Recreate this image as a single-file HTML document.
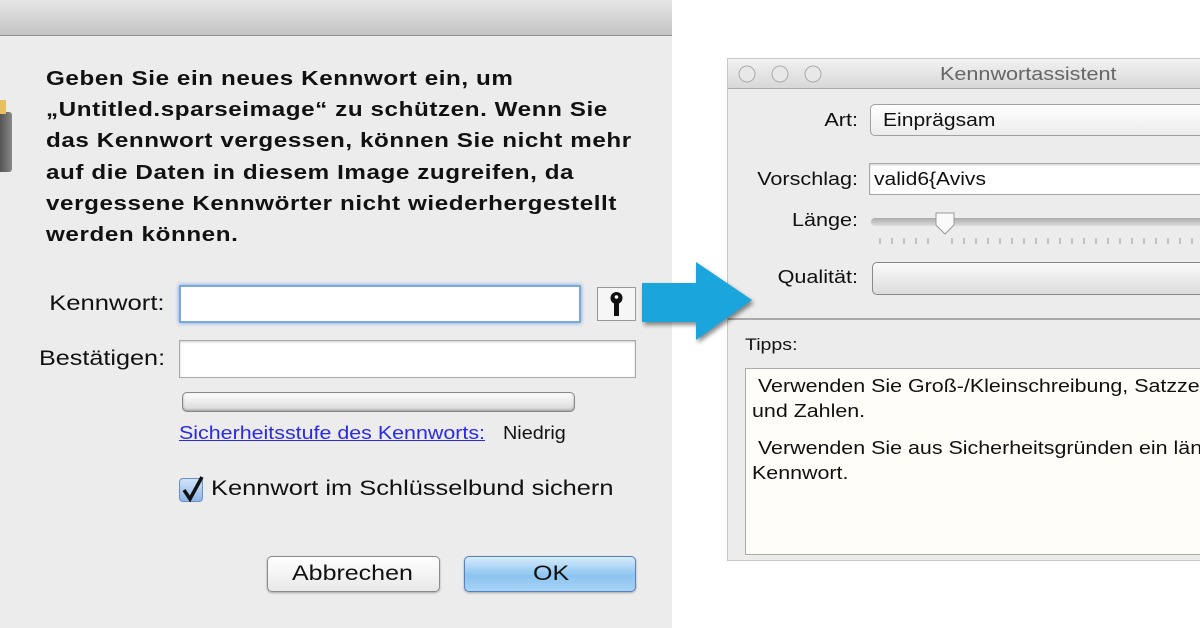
<!DOCTYPE html>
<html><head><meta charset="utf-8"><style>
*{margin:0;padding:0;box-sizing:border-box}
body{width:1200px;height:628px;overflow:hidden;background:#fff;font-family:"Liberation Sans",sans-serif;position:relative;color:#111}
.a{position:absolute}
.s{transform-origin:0 0;white-space:nowrap}
.sr{transform-origin:100% 0;white-space:nowrap;text-align:right}
#left{left:0;top:0;width:672px;height:628px;background:#ececec}
#tb{left:0;top:0;width:672px;height:36px;background:linear-gradient(#e6e6e6,#c4c4c4);border-bottom:1px solid #8e8e8e}
.msg{left:46px;top:63px;font-weight:bold;font-size:20.5px;line-height:31.2px;letter-spacing:0.5px;white-space:nowrap;transform:scaleX(1.18);transform-origin:0 0}
.inp{background:#fff;border:1px solid #a9a9a9;box-shadow:inset 0 1px 2px rgba(0,0,0,.2)}
.btn{border:1px solid #8a8a8a;border-radius:5px;background:linear-gradient(#fff,#e8e8e8);box-shadow:0 1px 2px rgba(0,0,0,.3)}
#win{left:727px;top:58px;width:480px;height:503px;background:#ececec;border:1px solid #c8c8c8}
</style></head><body>
<div id="left" class="a"></div>
<div id="tb" class="a"></div>
<div class="a" style="left:0;top:112px;width:12px;height:60px;background:linear-gradient(90deg,#555,#888);border-radius:0 3px 3px 0"></div>
<div class="a" style="left:0;top:100px;width:6px;height:14px;background:#e8c060"></div>
<div class="a msg">Geben Sie ein neues Kennwort ein, um<br>„Untitled.sparseimage“ zu schützen. Wenn Sie<br>das Kennwort vergessen, können Sie nicht mehr<br>auf die Daten in diesem Image zugreifen, da<br>vergessene Kennwörter nicht wiederhergestellt<br>werden können.</div>
<div class="a sr" style="right:1035px;top:292px;font-size:21px;transform:scaleX(1.22)">Kennwort:</div>
<div class="a inp" style="left:179px;top:285px;width:402px;height:38px;border:2px solid #7aa7dc;box-shadow:0 0 4px #6a9bd8"></div>
<div class="a" style="left:597px;top:287px;width:39px;height:34px;background:#f6f6f6;border:1px solid #999"></div>
<svg class="a" style="left:597px;top:287px" width="39" height="34"><circle cx="19.5" cy="11" r="6" fill="#111"/><circle cx="19.5" cy="10" r="1.8" fill="#fff"/><rect x="17" y="15" width="5" height="14" fill="#111"/></svg>
<div class="a sr" style="right:1035px;top:347px;font-size:21px;transform:scaleX(1.2)">Bestätigen:</div>
<div class="a inp" style="left:179px;top:340px;width:457px;height:38px"></div>
<div class="a" style="left:182px;top:392px;width:393px;height:20px;border:1px solid #888;border-radius:5px;background:linear-gradient(#fdfdfd,#d8d8d8);box-shadow:inset 0 -1px 2px rgba(0,0,0,.3)"></div>
<div class="a s" style="left:179px;top:423px;font-size:18px;color:#2a2ae6;text-decoration:underline;transform:scaleX(1.19)">Sicherheitsstufe des Kennworts:</div>
<div class="a s" style="left:503px;top:423px;font-size:18px;transform:scaleX(1.1)">Niedrig</div>
<div class="a" style="left:179px;top:478px;width:24px;height:24px;border:1px solid #6a8fc0;border-radius:4px;background:linear-gradient(#cfe3fa,#8fb6e8)"></div>
<svg class="a" style="left:179px;top:474px" width="28" height="30"><path d="M5 16 L11 25 L23 3" fill="none" stroke="#111" stroke-width="3.5"/></svg>
<div class="a s" style="left:211px;top:477px;font-size:21px;transform:scaleX(1.21)">Kennwort im Schlüsselbund sichern</div>
<div class="a btn" style="left:267px;top:556px;width:173px;height:36px"></div>
<div class="a s" style="left:292px;top:562px;font-size:21px;transform:scaleX(1.19)">Abbrechen</div>
<div class="a btn" style="left:464px;top:556px;width:172px;height:36px;background:linear-gradient(#d6ecfc,#8cc4f0 55%,#a8d4f6);border-color:#5a7fbf"></div>
<div class="a s" style="left:533px;top:562px;font-size:21px;transform:scaleX(1.19)">OK</div>
<div id="win" class="a"></div>
<div class="a" style="left:728px;top:59px;width:472px;height:30px;background:linear-gradient(#f2f2f2,#d8d8d8);border-bottom:1px solid #aaa"></div>
<svg class="a" style="left:728px;top:59px" width="110" height="30"><g fill="#e8e8e8" stroke="#aaa"><circle cx="19" cy="15" r="8"/><circle cx="52" cy="15" r="8"/><circle cx="85" cy="15" r="8"/></g></svg>
<div class="a s" style="left:940px;top:64px;font-size:18px;color:#666;transform:scaleX(1.2)">Kennwortassistent</div>
<div class="a sr" style="right:342px;top:110px;font-size:18px;transform:scaleX(1.2)">Art:</div>
<div class="a" style="left:870px;top:104px;width:340px;height:32px;border:1px solid #a0a0a0;border-radius:5px;background:linear-gradient(#fff,#ececec)"></div>
<div class="a s" style="left:883px;top:110px;font-size:18px;transform:scaleX(1.17)">Einprägsam</div>
<div class="a sr" style="right:342px;top:169px;font-size:18px;transform:scaleX(1.2)">Vorschlag:</div>
<div class="a inp" style="left:869px;top:163px;width:340px;height:32px"></div>
<div class="a s" style="left:874px;top:169px;font-size:18px;transform:scaleX(1.17)">valid6{Avivs</div>
<div class="a sr" style="right:342px;top:210px;font-size:18px;transform:scaleX(1.2)">Länge:</div>
<div class="a" style="left:871px;top:218px;width:340px;height:8px;border-radius:4px;background:linear-gradient(#aaa,#ddd)"></div>
<svg class="a" style="left:870px;top:210px" width="330" height="36"><path d="M66 3 h18 v12 l-9 9 l-9 -9 z" fill="#fafafa" stroke="#999"/><g stroke="#999"><path d="M10 28v6M22 28v6M34 28v6M46 28v6M58 28v6M82 28v6M94 28v6M106 28v6M118 28v6M130 28v6M142 28v6M154 28v6M166 28v6M178 28v6M190 28v6M202 28v6M214 28v6M226 28v6M238 28v6M250 28v6M262 28v6M274 28v6M286 28v6M298 28v6M310 28v6M322 28v6"/></g></svg>
<div class="a sr" style="right:342px;top:267px;font-size:18px;transform:scaleX(1.2)">Qualität:</div>
<div class="a" style="left:872px;top:262px;width:340px;height:33px;border:1px solid #888;border-radius:5px;background:linear-gradient(#fafafa,#dcdcdc)"></div>
<div class="a" style="left:728px;top:318px;width:472px;height:2px;background:#a8a8a8"></div>
<div class="a s" style="left:745px;top:335px;font-size:17px;transform:scaleX(1.15)">Tipps:</div>
<div class="a" style="left:745px;top:368px;width:460px;height:187px;background:#fffdf7;border:1px solid #aaa;overflow:hidden">
<div class="s" style="position:absolute;left:6px;top:5px;font-size:18px;line-height:25px;transform:scaleX(1.19)">&nbsp;Verwenden Sie Groß-/Kleinschreibung, Satzzeichen<br>und Zahlen.<div style="height:12px"></div>&nbsp;Verwenden Sie aus Sicherheitsgründen ein längeres<br>Kennwort.</div></div>
<svg class="a" style="left:640px;top:258px" width="120" height="88"><path d="M2 25 L56 25 L56 4 L112 42 L56 82 L56 64 L2 64 Z" fill="#1aa6dc" style="filter:drop-shadow(2px 3px 2px rgba(0,0,0,.45))"/></svg>
</body></html>
